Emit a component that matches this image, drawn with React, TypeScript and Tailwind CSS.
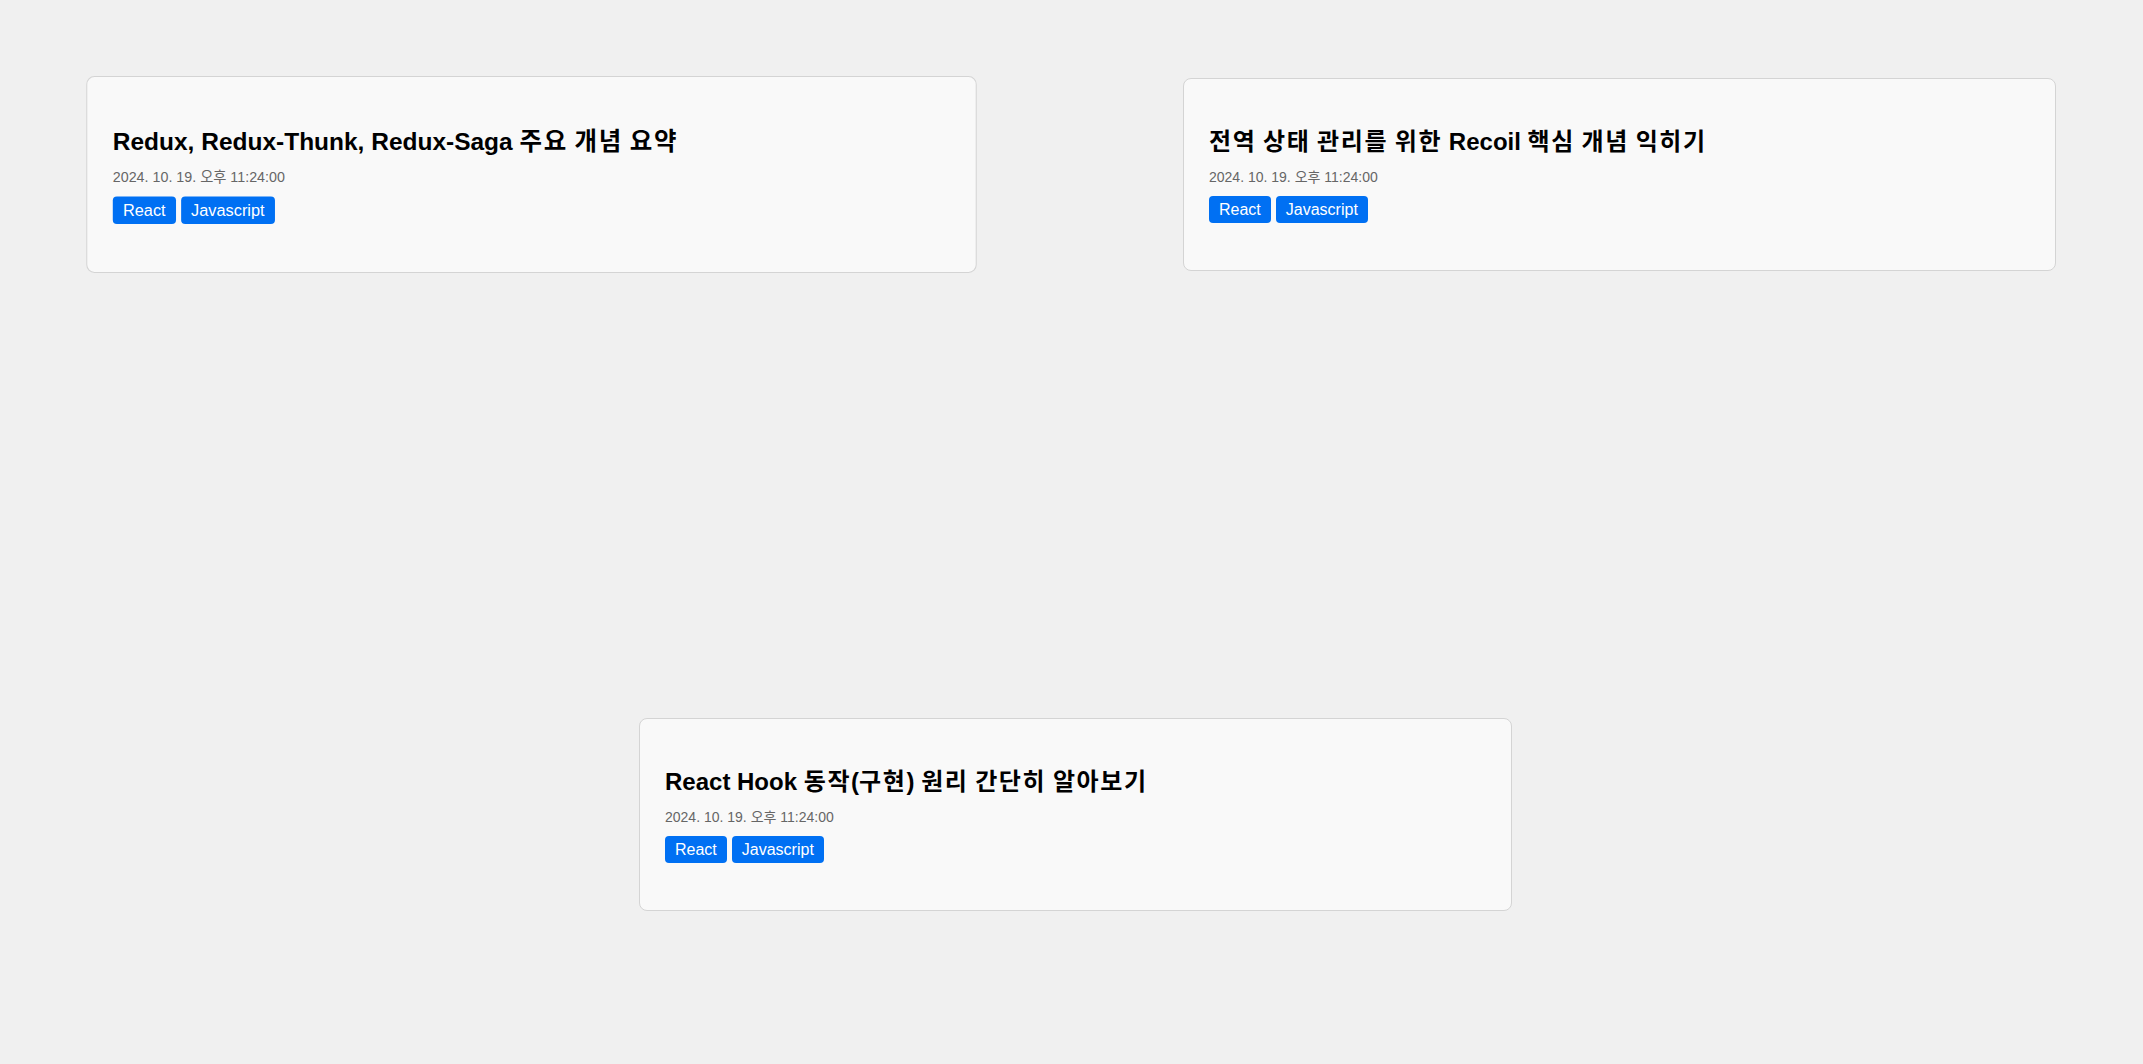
import React from 'react';

interface Post {
  title: string;
  date: string;
  tags: string[];
  hovered?: boolean;
}

const posts: Post[] = [
  {
    title: 'Redux, Redux-Thunk, Redux-Saga 주요 개념 요약',
    date: '2024. 10. 19. 오후 11:24:00',
    tags: ['React', 'Javascript'],
    hovered: true,
  },
  {
    title: '전역 상태 관리를 위한 Recoil 핵심 개념 익히기',
    date: '2024. 10. 19. 오후 11:24:00',
    tags: ['React', 'Javascript'],
  },
  {
    title: 'React Hook 동작(구현) 원리 간단히 알아보기',
    date: '2024. 10. 19. 오후 11:24:00',
    tags: ['React', 'Javascript'],
  },
];

// Hangul runs get a little extra spacing so the title widths match the original font
function Title({ text }: { text: string }) {
  const parts = text.split(/([\uAC00-\uD7A3]+)/);
  return (
    <>
      {parts.map((part, i) =>
        /[\uAC00-\uD7A3]/.test(part) ? (
          <span key={i} className="tracking-[1.6px]">
            {part}
          </span>
        ) : (
          <React.Fragment key={i}>{part}</React.Fragment>
        )
      )}
    </>
  );
}

function PostCard({ post, className = '' }: { post: Post; className?: string }) {
  return (
    <div
      className={`w-[873px] rounded-lg border border-[#d4d4d4] bg-[#f9f9f9] px-[25px] py-6 transition-transform ${
        post.hovered ? 'scale-[1.02]' : ''
      } ${className}`}
    >
      <h2 className="mt-[21px] text-[24px] font-bold leading-[36px] text-black">
        <Title text={post.title} />
      </h2>
      <p className="mt-[7px] text-[14px] leading-[21px] text-[#666]">{post.date}</p>
      {/* Tags */}
      <div className="mt-2 mb-[23px] flex gap-[5px]">
        {post.tags.map((tag) => (
          <span
            key={tag}
            className="rounded bg-[#0070f3] px-[10px] py-[4.5px] text-[16px] leading-[18px] text-white"
          >
            {tag}
          </span>
        ))}
      </div>
    </div>
  );
}

export default function App() {
  return (
    <div
      className="min-h-screen bg-[#f0f0f0] pt-[78px] pl-[95px]"
      style={{ fontFamily: '"Liberation Sans", Arial, "Noto Sans CJK KR", sans-serif' }}
    >
      <div className="grid grid-cols-[873px_873px] gap-x-[215px] gap-y-[447px]">
        <PostCard post={posts[0]} />
        <PostCard post={posts[1]} />
        <PostCard post={posts[2]} className="col-span-2 justify-self-center" />
      </div>
    </div>
  );
}
